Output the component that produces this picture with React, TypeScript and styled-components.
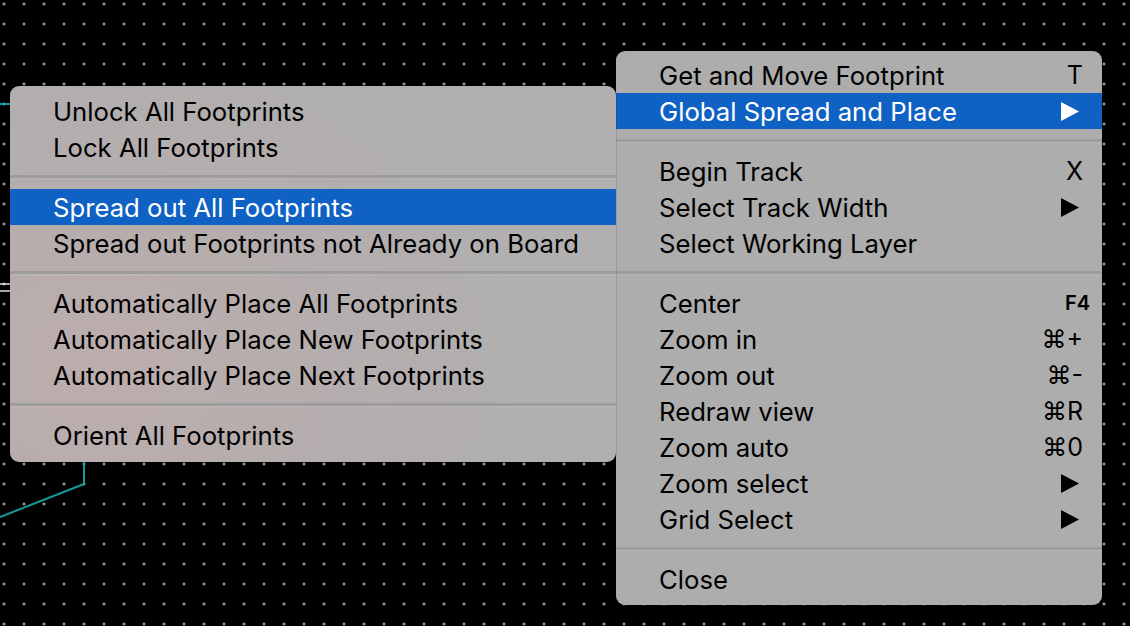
import React from "react";
import styled, { createGlobalStyle } from "styled-components";

const Global = createGlobalStyle`
  html, body { margin: 0; padding: 0; background: #000; }
  body { font-family: Inter, "Liberation Sans", sans-serif; }
`;

const Canvas = styled.div`
  position: relative;
  width: 1130px;
  height: 626px;
  overflow: hidden;
  background-color: #000;
  background-image: radial-gradient(circle, #8e8e8e 1.3px, transparent 1.8px);
  background-size: 20px 20px;
  background-position: -6px -6px;
`;

const Traces = styled.svg`
  position: absolute;
  left: 0;
  top: 0;
`;

const Menu = styled.div<{ $left: number; $top: number; $width: number; $padTop: number; $tint?: boolean }>`
  position: absolute;
  left: ${(p) => p.$left}px;
  top: ${(p) => p.$top}px;
  width: ${(p) => p.$width}px;
  padding: ${(p) => p.$padTop}px 0 ${(p) => p.$padTop + 2}px;
  box-sizing: border-box;
  border-radius: 9px;
  background: ${(p) =>
    p.$tint
      ? "radial-gradient(ellipse 70% 90% at 15% 75%, #bdadad 0%, #b6adad 45%, #b1afaf 100%)"
      : "#adadad"};
  box-shadow: 0 0 0 1px rgba(0, 0, 0, 0.12);
  display: flex;
  flex-direction: column;
  z-index: ${(p) => (p.$tint ? 2 : 1)};
`;

const Row = styled.div<{ $active?: boolean }>`
  height: 36px;
  display: flex;
  align-items: center;
  justify-content: space-between;
  padding: 0 19px 0 43px;
  font-size: 25.7px;
  color: ${(p) => (p.$active ? "#fff" : "#000")};
  background: ${(p) => (p.$active ? "#1061c4" : "transparent")};
  white-space: nowrap;
`;

const Label = styled.span``;

const Shortcut = styled.span<{ $small?: boolean }>`
  font-size: ${(p) => (p.$small ? "20px" : "25px")};
  font-weight: ${(p) => (p.$small ? 600 : 400)};
  margin-right: ${(p) => (p.$small ? "-7px" : "0")};
  display: flex;
  align-items: center;
`;

const Separator = styled.div`
  height: 24px;
  display: flex;
  flex-direction: column;
  justify-content: center;
  &::before {
    content: "";
    display: block;
    height: 3px;
    background: #9c9c9c;
  }
  &::after {
    content: "";
    display: block;
    height: 1px;
    background: rgba(255, 255, 255, 0.12);
  }
`;

const Arrow = ({ color }: { color: string }) => (
  <svg width="18" height="19" viewBox="0 0 18 19" style={{ marginRight: 4 }}>
    <polygon points="0,0 18,9.5 0,19" fill={color} />
  </svg>
);

type Item =
  | { sep: true }
  | { label: string; sc?: string; small?: boolean; arrow?: boolean; active?: boolean };

const leftItems: Item[] = [
  { label: "Unlock All Footprints" },
  { label: "Lock All Footprints" },
  { sep: true },
  { label: "Spread out All Footprints", active: true },
  { label: "Spread out Footprints not Already on Board" },
  { sep: true },
  { label: "Automatically Place All Footprints" },
  { label: "Automatically Place New Footprints" },
  { label: "Automatically Place Next Footprints" },
  { sep: true },
  { label: "Orient All Footprints" },
];

const rightItems: Item[] = [
  { label: "Get and Move Footprint", sc: "T" },
  { label: "Global Spread and Place", arrow: true, active: true },
  { sep: true },
  { label: "Begin Track", sc: "X" },
  { label: "Select Track Width", arrow: true },
  { label: "Select Working Layer" },
  { sep: true },
  { label: "Center", sc: "F4", small: true },
  { label: "Zoom in", sc: "⌘+" },
  { label: "Zoom out", sc: "⌘-" },
  { label: "Redraw view", sc: "⌘R" },
  { label: "Zoom auto", sc: "⌘0" },
  { label: "Zoom select", arrow: true },
  { label: "Grid Select", arrow: true },
  { sep: true },
  { label: "Close" },
];

const renderItems = (items: Item[]) =>
  items.map((it, i) =>
    "sep" in it ? (
      <Separator key={i} />
    ) : (
      <Row key={i} $active={it.active}>
        <Label>{it.label}</Label>
        {it.sc && <Shortcut $small={it.small}>{it.sc}</Shortcut>}
        {it.arrow && (
          <Shortcut>
            <Arrow color={it.active ? "#fff" : "#000"} />
          </Shortcut>
        )}
      </Row>
    )
  );

export default function App() {
  return (
    <>
      <Global />
      <Canvas>
        <Traces width="1130" height="626">
          <polyline points="0,517 84,484 84,460" fill="none" stroke="#16999a" strokeWidth="2" />
          <line x1="0" y1="104" x2="12" y2="104" stroke="#16999a" strokeWidth="2" />
          <line x1="0" y1="284" x2="12" y2="284" stroke="#e0e0e0" strokeWidth="1.5" />
          <line x1="0" y1="291" x2="12" y2="291" stroke="#e0e0e0" strokeWidth="1.5" />
        </Traces>
        <Menu $left={10} $top={86} $width={606} $padTop={7} $tint>
          {renderItems(leftItems)}
        </Menu>
        <Menu $left={616} $top={51} $width={486} $padTop={6}>
          {renderItems(rightItems)}
        </Menu>
      </Canvas>
    </>
  );
}
